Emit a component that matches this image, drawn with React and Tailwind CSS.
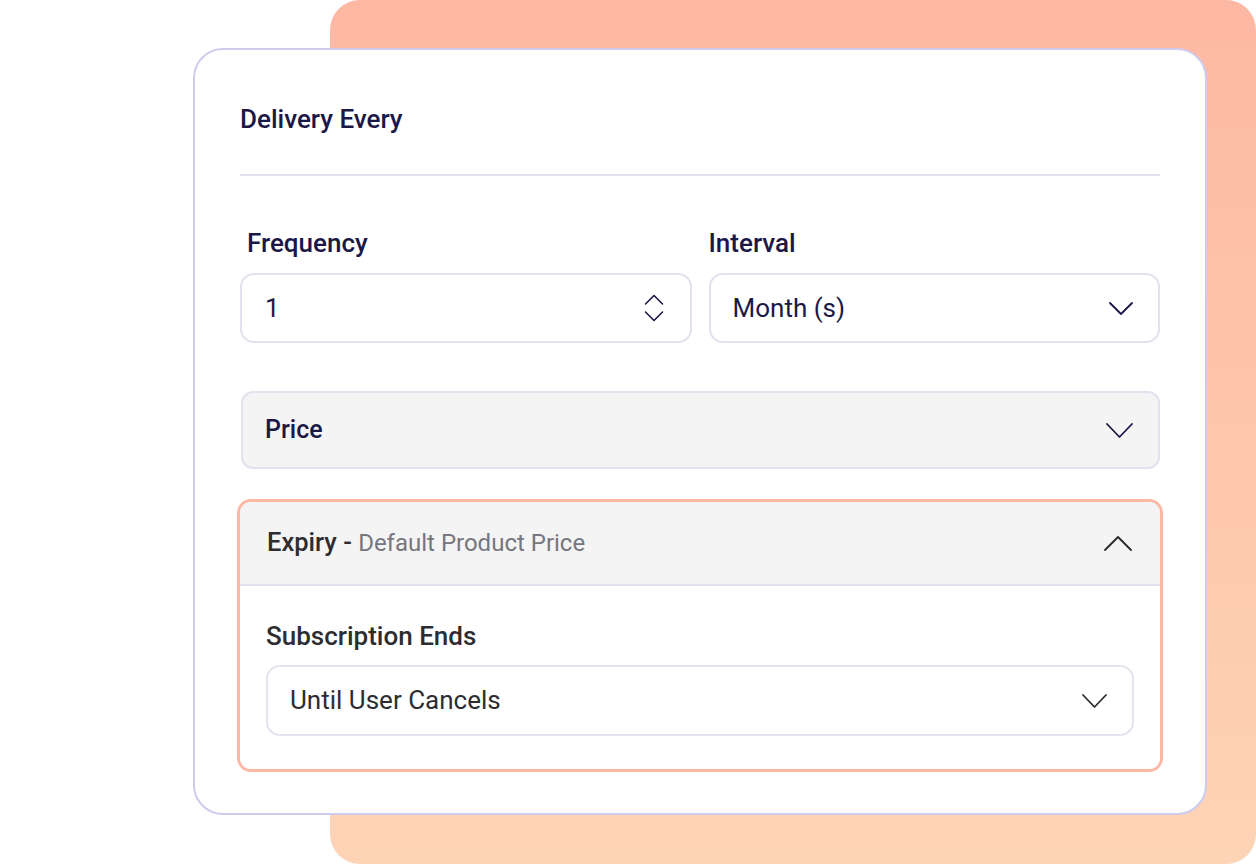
import React from "react";

const ChevronDown = ({ w = 24, h = 13, color = "#1b1847", sw = 1.8 }) => (
  <svg width={w} height={h} viewBox={`0 0 ${w} ${h}`} fill="none">
    <path d={`M1 1 L${w / 2} ${h - 1} L${w - 1} 1`} stroke={color} strokeWidth={sw} strokeLinecap="round" strokeLinejoin="round" />
  </svg>
);

const ChevronUp = ({ w = 28, h = 15, color = "#2a2a2e", sw = 1.8 }) => (
  <svg width={w} height={h} viewBox={`0 0 ${w} ${h}`} fill="none">
    <path d={`M1 ${h - 1} L${w / 2} 1 L${w - 1} ${h - 1}`} stroke={color} strokeWidth={sw} strokeLinecap="round" strokeLinejoin="round" />
  </svg>
);

const Spinner = () => (
  <svg width="20" height="28" viewBox="0 0 20 28" fill="none">
    <path d="M1.5 10 L10 1.5 L18.5 10" stroke="#1b1847" strokeWidth="1.6" strokeLinecap="round" strokeLinejoin="round" />
    <path d="M1.5 18 L10 26.5 L18.5 18" stroke="#1b1847" strokeWidth="1.6" strokeLinecap="round" strokeLinejoin="round" />
  </svg>
);

export default function App() {
  return (
    <div className="relative w-[1256px] h-[864px] bg-white overflow-hidden font-['Roboto',sans-serif]">
      <div className="absolute left-[330px] top-0 w-[926px] h-[864px] rounded-[30px] bg-gradient-to-b from-[#fdb8a3] to-[#fed4b6]" />
      <div className="relative pl-[193px] pt-[48px]">
        <div className="w-[1014px] h-[767px] rounded-[30px] border-2 border-[#cfcbee] bg-white pl-[45px] pr-[45px] pt-[54px]">
          <div className="h-[30px] flex items-center text-[26px] font-medium text-[#1b1847] leading-none">
            Delivery Every
          </div>
          <div className="mt-[40px] h-[2px] bg-[#e3e1f0]" />

          <div className="mt-[53px] grid grid-cols-2 gap-x-[17px]">
            <div>
              <div className="pl-[7px] h-[28px] flex items-center text-[26px] font-medium text-[#1b1847] leading-none">Frequency</div>
              <div className="mt-[16px] h-[70px] rounded-[14px] border-2 border-[#e2e1ee] flex items-center justify-between pl-[23px] pr-[26px]">
                <span className="text-[26px] text-[#1b1847]">1</span>
                <Spinner />
              </div>
            </div>
            <div>
              <div className="h-[28px] flex items-center text-[26px] font-medium text-[#1b1847] leading-none">Interval</div>
              <div className="mt-[16px] h-[70px] rounded-[14px] border-2 border-[#e2e1ee] flex items-center justify-between pl-[22px] pr-[25px]">
                <span className="text-[26px] text-[#1b1847]">Month (s)</span>
                <ChevronDown w={24} h={13} />
              </div>
            </div>
          </div>

          <div className="mt-[48px] ml-[1px] h-[78px] rounded-[12px] border-2 border-[#e2e1ee] bg-[#f4f4f5] flex items-center justify-between pl-[22px] pr-[25px]">
            <span className="text-[25px] font-medium text-[#1b1847]">Price</span>
            <ChevronDown w={27} h={15} />
          </div>

          <div className="mt-[30px] -mx-[3px] rounded-[14px] border-[3px] border-[#fdb9a3] overflow-hidden">
            <div className="h-[84px] bg-[#f4f4f4] border-b-2 border-[#e2e1ee] flex items-center justify-between pl-[27px] pr-[28px]">
              <span className="leading-none">
                <span className="text-[25.5px] font-medium text-[#2d2d31]">Expiry - </span>
                <span className="text-[24px] text-[#77767f]">Default Product Price</span>
              </span>
              <ChevronUp w={28} h={15} />
            </div>
            <div className="px-[26px] pt-[36px] pb-[33px] bg-white">
              <div className="h-[28px] flex items-center text-[26px] font-medium text-[#2d2d31] leading-none">Subscription Ends</div>
              <div className="mt-[15px] h-[71px] rounded-[14px] border-2 border-[#e4e3ef] flex items-center justify-between pl-[22px] pr-[25px]">
                <span className="text-[26px] text-[#2d2d31]">Until User Cancels</span>
                <ChevronDown w={25} h={14} color="#2d2d31" />
              </div>
            </div>
          </div>
        </div>
      </div>
    </div>
  );
}
